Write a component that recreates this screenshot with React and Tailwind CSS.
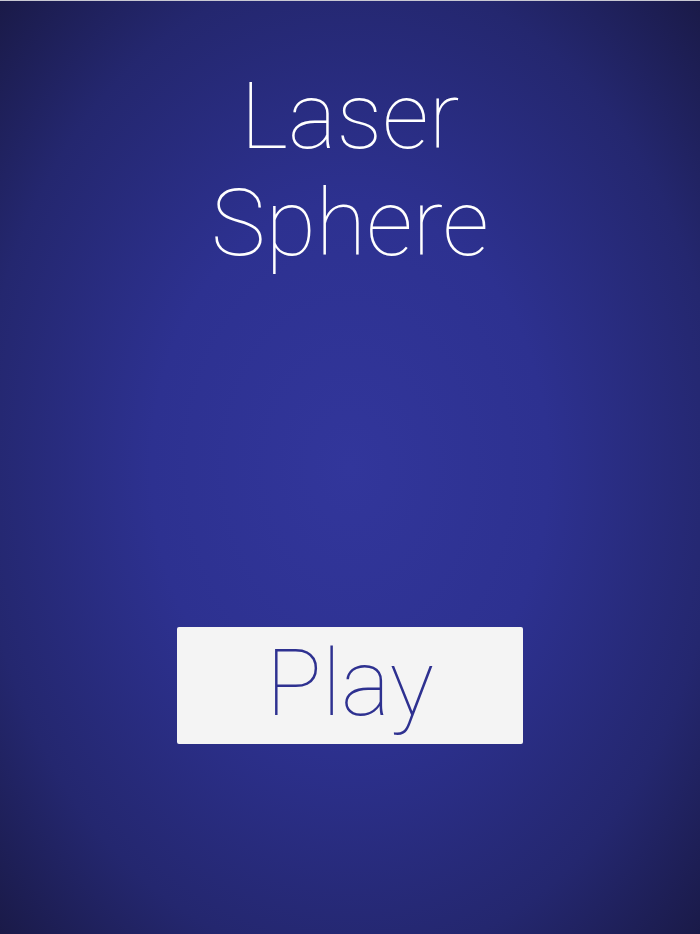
import React from "react";

function App() {
  return (
    <div
      className="flex h-[934px] w-[700px] flex-col items-center border-t border-[#c9c9d3] bg-[radial-gradient(ellipse_at_center,#32369b_0%,#2d3190_40%,#24276f_75%,#1a1a48_100%)]"
      style={{ fontFamily: "Roboto, 'Liberation Sans', sans-serif" }}
    >
      {/* Title */}
      <h1 className="mt-[62px] text-center text-[92px] font-thin leading-[107px] text-white">
        Laser
        <br />
        Sphere
      </h1>

      {/* Play button */}
      <button className="mt-[350px] flex h-[117px] w-[346px] items-center justify-center rounded-[2px] bg-[#f4f4f4] pb-[4px] text-[93px] font-thin text-[#2e3190]">
        Play
      </button>
    </div>
  );
}

export default App;
